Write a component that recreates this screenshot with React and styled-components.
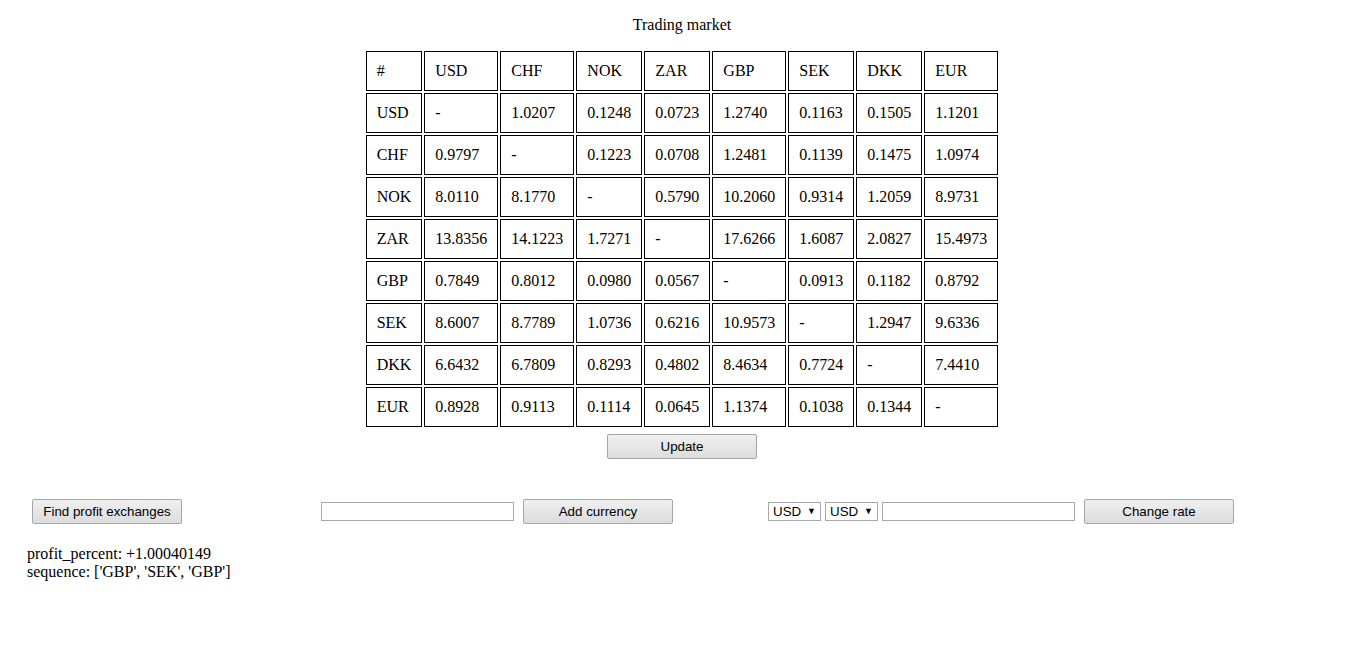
import React from "react";
import styled, { createGlobalStyle } from "styled-components";

const GlobalStyle = createGlobalStyle`
  html, body { margin: 0; padding: 0; background: #ffffff; }
  body {
    font-family: "Liberation Serif", "Times New Roman", serif;
    font-size: 16px;
    line-height: 18px;
    color: #000;
  }
`;

const Page = styled.div`
  display: flex;
  flex-direction: column;
  width: 1362px;
  padding-left: 1px;
`;

const Title = styled.div`
  margin-top: 16px;
  height: 18px;
  text-align: center;
`;

const RatesTable = styled.table`
  margin: 15px auto 0;
  border-collapse: separate;
  border-spacing: 2px;
`;

const Cell = styled.td`
  border: 1px solid #000;
  padding: 10px 10px;
  text-align: left;
  white-space: nowrap;
  line-height: 18px;
  font-weight: normal;
`;

const Button = styled.button`
  width: 150px;
  height: 25px;
  padding: 0;
  font-family: "Liberation Sans", Arial, sans-serif;
  font-size: 13.333px;
  color: #000;
  background: linear-gradient(#f0f0f0, #dcdcdc);
  border: 1px solid #a6a6a6;
  border-radius: 2px;
  box-sizing: border-box;
  cursor: pointer;
`;

const UpdateButton = styled(Button)`
  margin: 5px auto 0;
  display: block;
`;

const Controls = styled.div`
  display: flex;
  align-items: center;
  margin-top: 40px;
  padding-left: 31px;
  height: 25px;
`;

const Group = styled.div`
  display: flex;
  align-items: center;
  margin-left: ${(p) => p.$offset || 0}px;
`;

const TextInput = styled.input`
  width: 193px;
  height: 19px;
  box-sizing: border-box;
  border: 1px solid #a9a9a9;
  padding: 1px 2px;
  font-family: "Liberation Sans", Arial, sans-serif;
  font-size: 13.333px;
  margin-right: ${(p) => p.$gap || 0}px;
  outline: none;
`;

const SelectBox = styled.div`
  display: flex;
  align-items: center;
  justify-content: space-between;
  width: 53px;
  height: 19px;
  box-sizing: border-box;
  border: 1px solid #a9a9a9;
  padding: 0 4px 0 4px;
  font-family: "Liberation Sans", Arial, sans-serif;
  font-size: 13.333px;
  margin-right: 4px;
  background: #fff;
`;

const Arrow = styled.span`
  font-size: 9px;
  line-height: 1;
`;

const Result = styled.div`
  margin-top: 21px;
  padding-left: 26px;
  line-height: 18px;
`;

const currencies = ["USD", "CHF", "NOK", "ZAR", "GBP", "SEK", "DKK", "EUR"];
const rows = [
  ["-", "1.0207", "0.1248", "0.0723", "1.2740", "0.1163", "0.1505", "1.1201"],
  ["0.9797", "-", "0.1223", "0.0708", "1.2481", "0.1139", "0.1475", "1.0974"],
  ["8.0110", "8.1770", "-", "0.5790", "10.2060", "0.9314", "1.2059", "8.9731"],
  ["13.8356", "14.1223", "1.7271", "-", "17.6266", "1.6087", "2.0827", "15.4973"],
  ["0.7849", "0.8012", "0.0980", "0.0567", "-", "0.0913", "0.1182", "0.8792"],
  ["8.6007", "8.7789", "1.0736", "0.6216", "10.9573", "-", "1.2947", "9.6336"],
  ["6.6432", "6.7809", "0.8293", "0.4802", "8.4634", "0.7724", "-", "7.4410"],
  ["0.8928", "0.9113", "0.1114", "0.0645", "1.1374", "0.1038", "0.1344", "-"],
];

export default function App() {
  return (
    <Page>
      <GlobalStyle />
      <Title>Trading market</Title>
      <RatesTable>
        <tbody>
          <tr>
            <Cell>#</Cell>
            {currencies.map((c) => (
              <Cell key={c}>{c}</Cell>
            ))}
          </tr>
          {rows.map((r, i) => (
            <tr key={currencies[i]}>
              <Cell>{currencies[i]}</Cell>
              {r.map((v, j) => (
                <Cell key={j}>{v}</Cell>
              ))}
            </tr>
          ))}
        </tbody>
      </RatesTable>
      <UpdateButton>Update</UpdateButton>
      <Controls>
        <Group>
          <Button>Find profit exchanges</Button>
        </Group>
        <Group $offset={139}>
          <TextInput $gap={9} />
          <Button>Add currency</Button>
        </Group>
        <Group $offset={95}>
          <SelectBox>
            USD <Arrow>▼</Arrow>
          </SelectBox>
          <SelectBox>
            USD <Arrow>▼</Arrow>
          </SelectBox>
          <TextInput $gap={9} />
          <Button>Change rate</Button>
        </Group>
      </Controls>
      <Result>
        profit_percent: +1.00040149
        <br />
        sequence: ['GBP', 'SEK', 'GBP']
      </Result>
    </Page>
  );
}
